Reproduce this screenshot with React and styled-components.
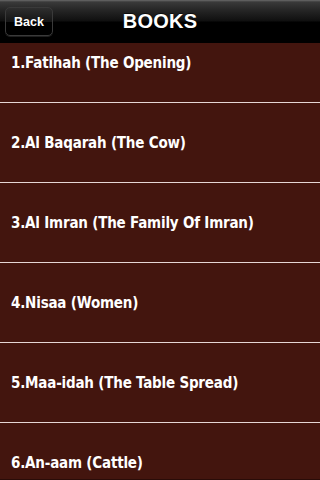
import React from "react";
import styled, { createGlobalStyle } from "styled-components";

const Global = createGlobalStyle`
  html, body { margin: 0; padding: 0; background: #43150e; }
  #root { width: 320px; height: 480px; overflow: hidden; }
`;

const Screen = styled.div`
  width: 320px;
  height: 480px;
  display: flex;
  flex-direction: column;
  background: #43150e;
  overflow: hidden;
`;

const NavBar = styled.div`
  position: relative;
  z-index: 2;
  flex: 0 0 43px;
  height: 43px;
  display: flex;
  align-items: center;
  justify-content: center;
  background: linear-gradient(to bottom, #6a6a6a 0px, #3a3a3a 2px, #262626 10px, #0f0f0f 21px, #000 22px, #000 43px);
`;

const BackButton = styled.button`
  position: absolute;
  left: 5px;
  top: 7px;
  width: 48px;
  height: 29px;
  box-sizing: border-box;
  border-radius: 5px;
  border: 1px solid #3a3a3a;
  background: linear-gradient(to bottom, #2e2e2e 0%, #151515 50%, #000 51%, #000 100%);
  color: #fff;
  font-family: "Liberation Sans", Arial, sans-serif;
  font-weight: bold;
  font-size: 12.5px;
  padding: 0;
  display: flex;
  align-items: center;
  justify-content: center;
  box-shadow: 0 1px 0 rgba(255,255,255,0.12);
`;

const Title = styled.h1`
  margin: 0;
  color: #fff;
  font-family: "Liberation Sans", Arial, sans-serif;
  font-weight: bold;
  font-size: 20px;
  letter-spacing: 0.2px;
  text-shadow: 0 -1px 0 rgba(0,0,0,0.6);
`;

const List = styled.div`
  flex: 1;
  overflow: hidden;
  border-bottom: 1px solid #2a0c08;
`;

const Rows = styled.ul`
  list-style: none;
  margin: -20px 0 0 0;
  padding: 0;
`;

const Row = styled.li`
  height: 79px;
  border-bottom: 1px solid #e6d6d4;
  display: flex;
  align-items: center;
  padding-left: 11px;
  color: #fff;
  font-family: "DejaVu Sans Condensed", "DejaVu Sans", sans-serif;
  font-weight: bold;
  font-size: 15px;
  letter-spacing: -0.2px;
`;

const items = [
  "1.Fatihah (The Opening)",
  "2.Al Baqarah (The Cow)",
  "3.Al Imran (The Family Of Imran)",
  "4.Nisaa (Women)",
  "5.Maa-idah (The Table Spread)",
  "6.An-aam (Cattle)",
];

export default function App() {
  return (
    <>
      <Global />
      <Screen>
        <NavBar>
          <BackButton>Back</BackButton>
          <Title>BOOKS</Title>
        </NavBar>
        <List>
          <Rows>
            {items.map((t) => (
              <Row key={t}>{t}</Row>
            ))}
          </Rows>
        </List>
      </Screen>
    </>
  );
}
